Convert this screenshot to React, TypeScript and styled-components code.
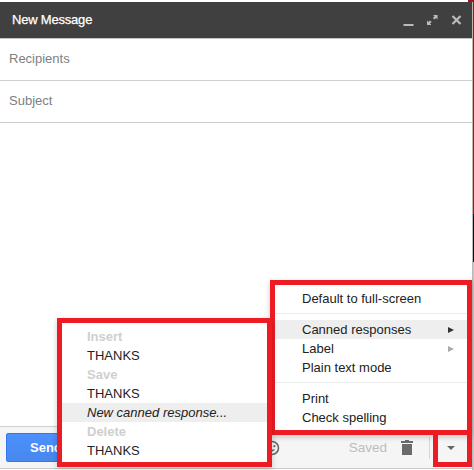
import * as React from 'react';
import styled, { createGlobalStyle } from 'styled-components';

const GlobalStyle = createGlobalStyle`
  html, body {
    margin: 0;
    padding: 0;
    background: #fff;
  }
  body {
    font-family: "Liberation Sans", Arial, sans-serif;
    font-size: 13px;
  }
`;

const Page = styled.div`
  position: relative;
  display: flex;
  width: 474px;
  height: 470px;
  overflow: hidden;
  background: #fff;
`;

const Compose = styled.div`
  flex: 1;
  display: flex;
  flex-direction: column;
  height: 100%;
  padding-top: 2px;
  padding-bottom: 1px;
  box-sizing: border-box;
  border-right: 1px solid #b8b8b8;
`;

// whatever was behind the window when the screenshot was taken
const BackdropEdge = styled.div`
  flex: none;
  width: 1px;
  background: linear-gradient(#a5141b 0 214px, #111 214px 262px, #c8c8c8 262px);
`;

const BackdropCorner = styled.div`
  position: absolute;
  top: 0;
  right: 0;
  width: 6px;
  height: 2px;
  background: #a5141b;
`;

const TitleBar = styled.div`
  display: flex;
  align-items: center;
  flex: none;
  height: 36px;
  padding: 0 10px 0 12px;
  background: #404040;
  border-bottom: 1px solid #c4c4c4;
`;

const Title = styled.div`
  flex: 1;
  margin-bottom: 2px;
  color: #fff;
  font-size: 13px;
  letter-spacing: -0.2px;
  -webkit-text-stroke: 0.25px #fff;
`;

const TitleIcons = styled.div`
  display: flex;
  align-items: center;
  gap: 13px;
`;

const FieldRow = styled.div`
  flex: none;
  display: flex;
  align-items: center;
  height: 42px;
  padding: 0 0 2px 9px;
  box-sizing: border-box;
  color: #808080;
  border-bottom: 1px solid #cfcfcf;
`;

const Body = styled.div`
  flex: 1;
`;

const Footer = styled.div`
  flex: none;
  display: flex;
  align-items: center;
  height: 41px;
  padding: 0 0 0 6px;
  background: #f5f5f5;
  border-top: 1px solid #cfcfcf;
  border-bottom: 1px solid #c8c8c8;
`;

const SendButton = styled.button`
  width: 80px;
  height: 29px;
  padding: 0 0 0 23px;
  text-align: left;
  color: #fff;
  font: bold 13px "Liberation Sans", Arial, sans-serif;
  background: linear-gradient(#4d90fe, #4787ed);
  border: 1px solid #3079ed;
  border-radius: 2px;
`;

const FooterRight = styled.div`
  margin-left: auto;
  display: flex;
  align-items: center;
`;

const Smiley = styled.svg`
  display: block;
  margin-right: 69px;
`;

const Saved = styled.span`
  color: #bdbdbd;
  font-size: 13.5px;
  margin-right: 14px;
`;

const FooterDivider = styled.div`
  width: 1px;
  height: 22px;
  margin: 0 17px 0 16px;
  background: #d8d8d8;
`;

const MoreArrow = styled.div`
  width: 0;
  height: 0;
  margin-right: 17px;
  border-left: 4px solid transparent;
  border-right: 4px solid transparent;
  border-top: 4px solid #666;
`;

/* the red boxes are drawn over the screenshot, so they get placed by hand */
const Callout = styled.div<{ $left: number; $top: number; $width: number; $height: number }>`
  position: absolute;
  left: ${p => p.$left}px;
  top: ${p => p.$top}px;
  width: ${p => p.$width}px;
  height: ${p => p.$height}px;
  box-sizing: border-box;
  border: 5px solid #ed1c24;
`;

const Menu = styled(Callout)`
  background: #fff;
  box-shadow: 0 2px 6px rgba(0, 0, 0, 0.2);
  color: #222;
`;

const RightMenu = styled.div`
  padding: 4px 0 3px;
`;

const LeftMenu = styled.div`
  padding: 4px 0 2px;
`;

const Item = styled.div<{ $active?: boolean; $inset: number }>`
  display: flex;
  align-items: center;
  justify-content: space-between;
  height: 19px;
  padding: 0 13px 0 ${p => p.$inset}px;
  background: ${p => (p.$active ? '#eeeeee' : 'transparent')};
`;

const ItemNote = styled.span`
  font-style: italic;
`;

const Heading = styled.div`
  display: flex;
  align-items: center;
  height: 19px;
  padding-left: 25px;
  color: #cfcfcf;
  font-weight: bold;
  font-size: 13px;
`;

const Separator = styled.div`
  height: 1px;
  margin: 5px 0 6px;
  background: #ebebeb;
`;

const Caret = styled.span<{ $dark?: boolean }>`
  width: 0;
  height: 0;
  border-top: 3px solid transparent;
  border-bottom: 3px solid transparent;
  border-left: 6px solid ${p => (p.$dark ? '#333' : '#aaa')};
`;

export default function App() {
  return (
    <Page>
      <GlobalStyle />
      <Compose>
        <TitleBar>
          <Title>New Message</Title>
          <TitleIcons>
            <svg width="11" height="12" viewBox="0 0 11 12">
              <rect x="0.5" y="10" width="10" height="2" fill="#bbb" />
            </svg>
            <svg width="11" height="12" viewBox="0 0 11 12" fill="#bbb">
              <path d="M6 1h4.5v4.5L9 4 7.4 5.6 5.9 4.1 7.5 2.5zM4.5 11H0V6.5L1.5 8 3.1 6.4 4.6 7.9 3 9.500z" />
            </svg>
            <svg width="11" height="12" viewBox="0 0 11 12">
              <path d="M1.5 2l8 8M9.5 2l-8 8" stroke="#bbb" strokeWidth="2.2" fill="none" />
            </svg>
          </TitleIcons>
        </TitleBar>
        <FieldRow>Recipients</FieldRow>
        <FieldRow>Subject</FieldRow>
        <Body />
        <Footer>
          <SendButton>Send</SendButton>
          <FooterRight>
            <Smiley width="16" height="16" viewBox="0 0 16 16">
              <circle cx="8" cy="8" r="6.5" fill="none" stroke="#666" strokeWidth="1.6" />
              <circle cx="5.6" cy="6.2" r="1.1" fill="#666" />
              <circle cx="10.4" cy="6.2" r="1.1" fill="#666" />
              <path d="M4.8 9.6c1.4 2.4 5 2.4 6.4 0z" fill="#666" />
            </Smiley>
            <Saved>Saved</Saved>
            <svg width="12" height="15" viewBox="0 0 12 15" fill="#6b6b6b">
              <path d="M4 0h4v1h4v2H0V1h4zM1 4h10v11H1z" />
            </svg>
            <FooterDivider />
            <MoreArrow />
          </FooterRight>
        </Footer>
      </Compose>
      <BackdropEdge />
      <BackdropCorner />

      <Menu $left={270} $top={280} $width={202} $height={155}>
        <RightMenu>
          <Item $inset={27}>Default to full-screen</Item>
          <Separator />
          <Item $inset={27} $active>
            Canned responses
            <Caret $dark />
          </Item>
          <Item $inset={27}>
            Label
            <Caret />
          </Item>
          <Item $inset={27}>Plain text mode</Item>
          <Separator />
          <Item $inset={27}>Print</Item>
          <Item $inset={27}>Check spelling</Item>
        </RightMenu>
      </Menu>

      <Menu $left={57} $top={318} $width={215} $height={149}>
        <LeftMenu>
          <Heading>Insert</Heading>
          <Item $inset={25}>THANKS</Item>
          <Heading>Save</Heading>
          <Item $inset={25}>THANKS</Item>
          <Item $inset={25} $active>
            <ItemNote>New canned response...</ItemNote>
          </Item>
          <Heading>Delete</Heading>
          <Item $inset={25}>THANKS</Item>
        </LeftMenu>
      </Menu>

      <Callout $left={433} $top={430} $width={39} $height={37} />
    </Page>
  );
}
